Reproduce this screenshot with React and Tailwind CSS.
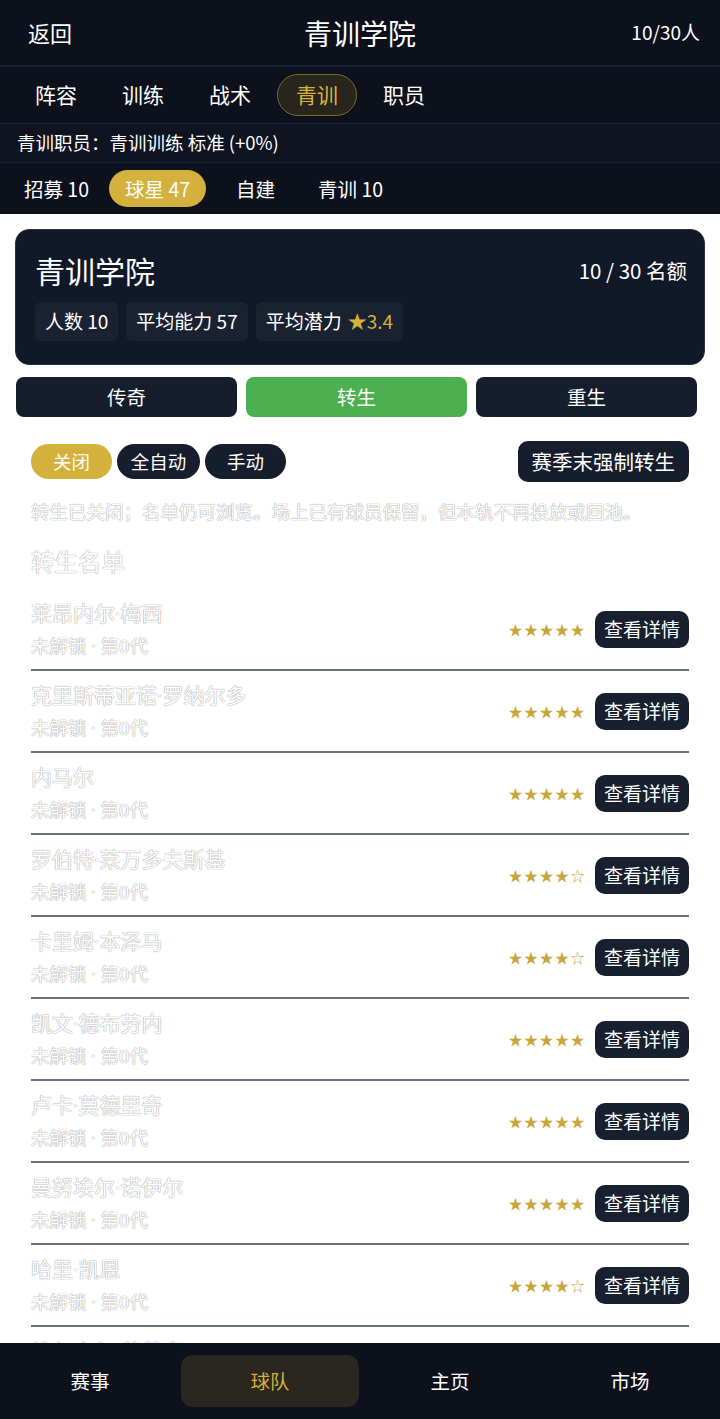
import { useState } from "react";

const players = [
  { name: "莱昂内尔·梅西", stars: 5 },
  { name: "克里斯蒂亚诺·罗纳尔多", stars: 5 },
  { name: "内马尔", stars: 5 },
  { name: "罗伯特·莱万多夫斯基", stars: 4 },
  { name: "卡里姆·本泽马", stars: 4 },
  { name: "凯文·德布劳内", stars: 5 },
  { name: "卢卡·莫德里奇", stars: 5 },
  { name: "曼努埃尔·诺伊尔", stars: 5 },
  { name: "哈里·凯恩", stars: 4 },
  { name: "维尔吉尔·范戴克", stars: 4 },
];

// washed-out text used in the list part
const faded =
  "font-['Roboto','Noto_Sans_CJK_SC',sans-serif] text-white [text-shadow:0_0_1px_#9a9a9a,0_0_1px_#9a9a9a]";

const PlayerRow = ({ player }) => (
  <div className="flex items-center h-[82px] border-b-2 border-[#6b7280]">
    <div className="flex-1 pt-[1px]">
      <div className={`text-[21px] leading-[27px] ${faded}`}>{player.name}</div>
      <div className={`text-[18.5px] leading-[24px] mt-[7px] ${faded}`}>未解锁 · 第0代</div>
    </div>
    <div className="text-[14px] tracking-[1.5px] text-[#c9a63a] mr-[9px]">
      {"★".repeat(player.stars) + "☆".repeat(5 - player.stars)}
    </div>
    <button className="h-[37px] px-[9px] rounded-[10px] bg-[#18202f] text-white text-[19px]">
      查看详情
    </button>
  </div>
);

export default function App() {
  const [tab, setTab] = useState("转生");

  return (
    <div className="min-h-screen bg-white font-['Noto_Sans_CJK_SC',sans-serif] pb-[90px]">
      {/* top bars */}
      <div className="bg-[#0c111c] text-white">
        <div className="h-[65px] flex items-center justify-between px-[28px] pr-[20px] relative">
          <span className="text-[22px]">返回</span>
          <span className="absolute left-1/2 -translate-x-1/2 text-[28px]">青训学院</span>
          <span className="text-[19px]">10/30人</span>
        </div>
        <div className="h-[2px] bg-[#1c2231]" />
        <div className="h-[56px] flex items-center gap-[7px] px-[16px] text-[21px]">
          {["阵容", "训练", "战术", "青训", "职员"].map((t) =>
            t === "青训" ? (
              <span
                key={t}
                className="h-[42px] flex items-center px-[18px] rounded-full border-[1.5px] border-[#7c6a2c] bg-[#27251c] text-[#d8b63e]"
              >
                {t}
              </span>
            ) : (
              <span key={t} className="px-[19px]">
                {t}
              </span>
            )
          )}
        </div>
        <div className="h-[1px] bg-[#1c2231]" />
        <div className="h-[38px] flex items-center px-[17px] text-[18.5px] bg-[#0f1420]">
          青训职员：青训训练 标准 (+0%)
        </div>
        <div className="h-[1px] bg-[#1c2231]" />
        <div className="h-[51px] flex items-center px-[24px] text-[19.5px]">
          <span>招募 10</span>
          <span className="ml-[20px] h-[37px] flex items-center px-[16px] rounded-full bg-[#d4b13c] text-white">
            球星 47
          </span>
          <span className="ml-[30px]">自建</span>
          <span className="ml-[43px]">青训 10</span>
        </div>
      </div>

      {/* academy card */}
      <div className="mx-[15px] mt-[15px] rounded-[14px] bg-[#111827] border border-[#2a3142] pt-[20px] pb-[23px] pl-[19px] pr-[17px] text-white">
        <div className="flex items-center justify-between">
          <span className="text-[30px] leading-[40px]">青训学院</span>
          <span className="text-[20.5px]">10 / 30 名额</span>
        </div>
        <div className="flex gap-[8px] mt-[12px] text-[19px]">
          <span className="h-[39px] flex items-center px-[10px] rounded-[6px] bg-[#1a2131]">人数 10</span>
          <span className="h-[39px] flex items-center px-[10px] rounded-[6px] bg-[#1a2131]">平均能力 57</span>
          <span className="h-[39px] flex items-center px-[10px] rounded-[6px] bg-[#1a2131]">
            平均潜力 <span className="text-[#d4b13c] ml-[6px]">★3.4</span>
          </span>
        </div>
      </div>

      {/* mode buttons */}
      <div className="grid grid-cols-3 gap-[9px] ml-[16px] w-[681px] mt-[12px]">
        {["传奇", "转生", "重生"].map((t) => (
          <button
            key={t}
            onClick={() => setTab(t)}
            className={`h-[40px] rounded-[8px] text-[19.5px] text-white ${
              tab === t ? "bg-[#4caf50]" : "bg-[#161d2c]"
            }`}
          >
            {t}
          </button>
        ))}
      </div>

      {/* controls */}
      <div className="flex items-center justify-between px-[31px] mt-[24px]">
        <div className="flex gap-[5px] text-[18.5px] text-white">
          <span className="h-[35px] w-[81px] flex items-center justify-center rounded-full bg-[#d4b13c]">关闭</span>
          <span className="h-[35px] w-[83px] flex items-center justify-center rounded-full bg-[#161d2c]">全自动</span>
          <span className="h-[35px] w-[81px] flex items-center justify-center rounded-full bg-[#161d2c]">手动</span>
        </div>
        <button className="h-[41px] px-[14px] rounded-[10px] bg-[#161d2c] text-white text-[20.5px]">
          赛季末强制转生
        </button>
      </div>

      <p className={`px-[31px] mt-[18px] text-[18.5px] leading-[26px] whitespace-nowrap ${faded}`}>
        转生已关闭；名单仍可浏览。场上已有球员保留，但本轨不再投放或回池。
      </p>
      <h2 className={`px-[31px] mt-[21px] text-[23.5px] leading-[32px] ${faded}`}>转生名单</h2>

      <div className="px-[31px] mt-[10px]">
        {players.map((p) => (
          <PlayerRow key={p.name} player={p} />
        ))}
      </div>

      {/* bottom nav */}
      <div className="fixed bottom-0 left-0 right-0 h-[76px] bg-[#0c111c] grid grid-cols-4 text-[19.5px] text-white">
        {["赛事", "球队", "主页", "市场"].map((t) => (
          <div key={t} className="flex items-center justify-center">
            {t === "球队" ? (
              <span className="w-[178px] h-[52px] flex items-center justify-center rounded-[12px] bg-[#2a2720] text-[#d4b13c]">
                {t}
              </span>
            ) : (
              <span>{t}</span>
            )}
          </div>
        ))}
      </div>
    </div>
  );
}
